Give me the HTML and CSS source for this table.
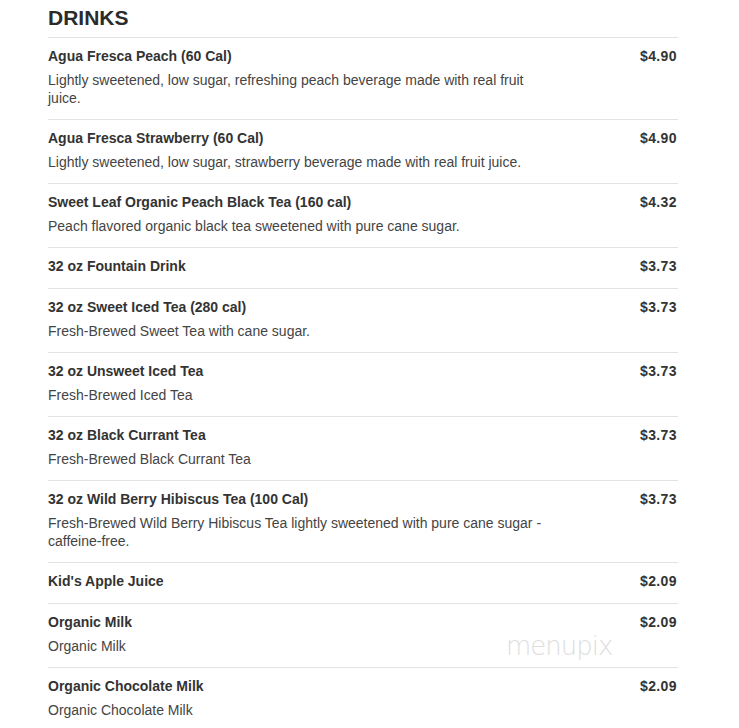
FILE: index.html
```html
<!DOCTYPE html>
<html>
<head>
<meta charset="utf-8">
<link rel="stylesheet" href="styles.css">
</head>
<body>
<main class="menu">
  <h2 class="section-title">DRINKS</h2>
  <ul class="items">
    <li class="item">
      <div class="item-main">
        <div class="item-name">Agua Fresca Peach (60 Cal)</div>
        <div class="item-desc">Lightly sweetened, low sugar, refreshing peach beverage made with real fruit juice.</div>
      </div>
      <div class="item-price">$4.90</div>
    </li>
    <li class="item">
      <div class="item-main">
        <div class="item-name">Agua Fresca Strawberry (60 Cal)</div>
        <div class="item-desc">Lightly sweetened, low sugar, strawberry beverage made with real fruit juice.</div>
      </div>
      <div class="item-price">$4.90</div>
    </li>
    <li class="item">
      <div class="item-main">
        <div class="item-name">Sweet Leaf Organic Peach Black Tea (160 cal)</div>
        <div class="item-desc">Peach flavored organic black tea sweetened with pure cane sugar.</div>
      </div>
      <div class="item-price">$4.32</div>
    </li>
    <li class="item no-desc">
      <div class="item-main">
        <div class="item-name">32 oz Fountain Drink</div>
      </div>
      <div class="item-price">$3.73</div>
    </li>
    <li class="item">
      <div class="item-main">
        <div class="item-name">32 oz Sweet Iced Tea (280 cal)</div>
        <div class="item-desc">Fresh-Brewed Sweet Tea with cane sugar.</div>
      </div>
      <div class="item-price">$3.73</div>
    </li>
    <li class="item">
      <div class="item-main">
        <div class="item-name">32 oz Unsweet Iced Tea</div>
        <div class="item-desc">Fresh-Brewed Iced Tea</div>
      </div>
      <div class="item-price">$3.73</div>
    </li>
    <li class="item">
      <div class="item-main">
        <div class="item-name">32 oz Black Currant Tea</div>
        <div class="item-desc">Fresh-Brewed Black Currant Tea</div>
      </div>
      <div class="item-price">$3.73</div>
    </li>
    <li class="item">
      <div class="item-main">
        <div class="item-name">32 oz Wild Berry Hibiscus Tea (100 Cal)</div>
        <div class="item-desc">Fresh-Brewed Wild Berry Hibiscus Tea lightly sweetened with pure cane sugar - caffeine-free.</div>
      </div>
      <div class="item-price">$3.73</div>
    </li>
    <li class="item no-desc">
      <div class="item-main">
        <div class="item-name">Kid's Apple Juice</div>
      </div>
      <div class="item-price">$2.09</div>
    </li>
    <li class="item">
      <div class="item-main">
        <div class="item-name">Organic Milk</div>
        <div class="item-desc">Organic Milk</div>
      </div>
      <div class="item-price">$2.09</div>
      <div class="watermark">menupix</div>
    </li>
    <li class="item">
      <div class="item-main">
        <div class="item-name">Organic Chocolate Milk</div>
        <div class="item-desc">Organic Chocolate Milk</div>
      </div>
      <div class="item-price">$2.09</div>
    </li>
  </ul>
</main>
</body>
</html>
```
FILE: styles.css
```css
* { box-sizing: border-box; }
html, body { margin: 0; padding: 0; background: #fff; }
body {
  font-family: "Liberation Sans", Arial, sans-serif;
  font-size: 14px;
  color: #333;
}
.menu {
  width: 630px;
  margin-left: 48px;
  padding-top: 4px;
}
.section-title {
  margin: 0;
  font-size: 21px;
  line-height: 28px;
  font-weight: bold;
  color: #2b2b2b;
  padding-bottom: 5px;
}
.items {
  list-style: none;
  margin: 0;
  padding: 0;
}
.item {
  position: relative;
  display: flex;
  justify-content: space-between;
  align-items: flex-start;
  border-top: 1px solid #e3e3e3;
  padding: 9px 0 12px;
}
.item.no-desc { padding-bottom: 13px; }
.item-main { width: 500px; }
.item-name {
  font-weight: bold;
  line-height: 18px;
  color: #333;
}
.item-desc {
  margin-top: 6px;
  line-height: 18px;
  color: #444;
}
.item-price {
  font-weight: bold;
  line-height: 18px;
  color: #333;
  letter-spacing: 0.4px;
  margin-right: 1px;
}
.watermark {
  position: absolute;
  left: 458px;
  top: 27px;
  font-family: "DejaVu Sans", sans-serif;
  font-weight: 200;
  font-size: 26px;
  letter-spacing: -1px;
  color: #dedede;
  line-height: 30px;
}
```
